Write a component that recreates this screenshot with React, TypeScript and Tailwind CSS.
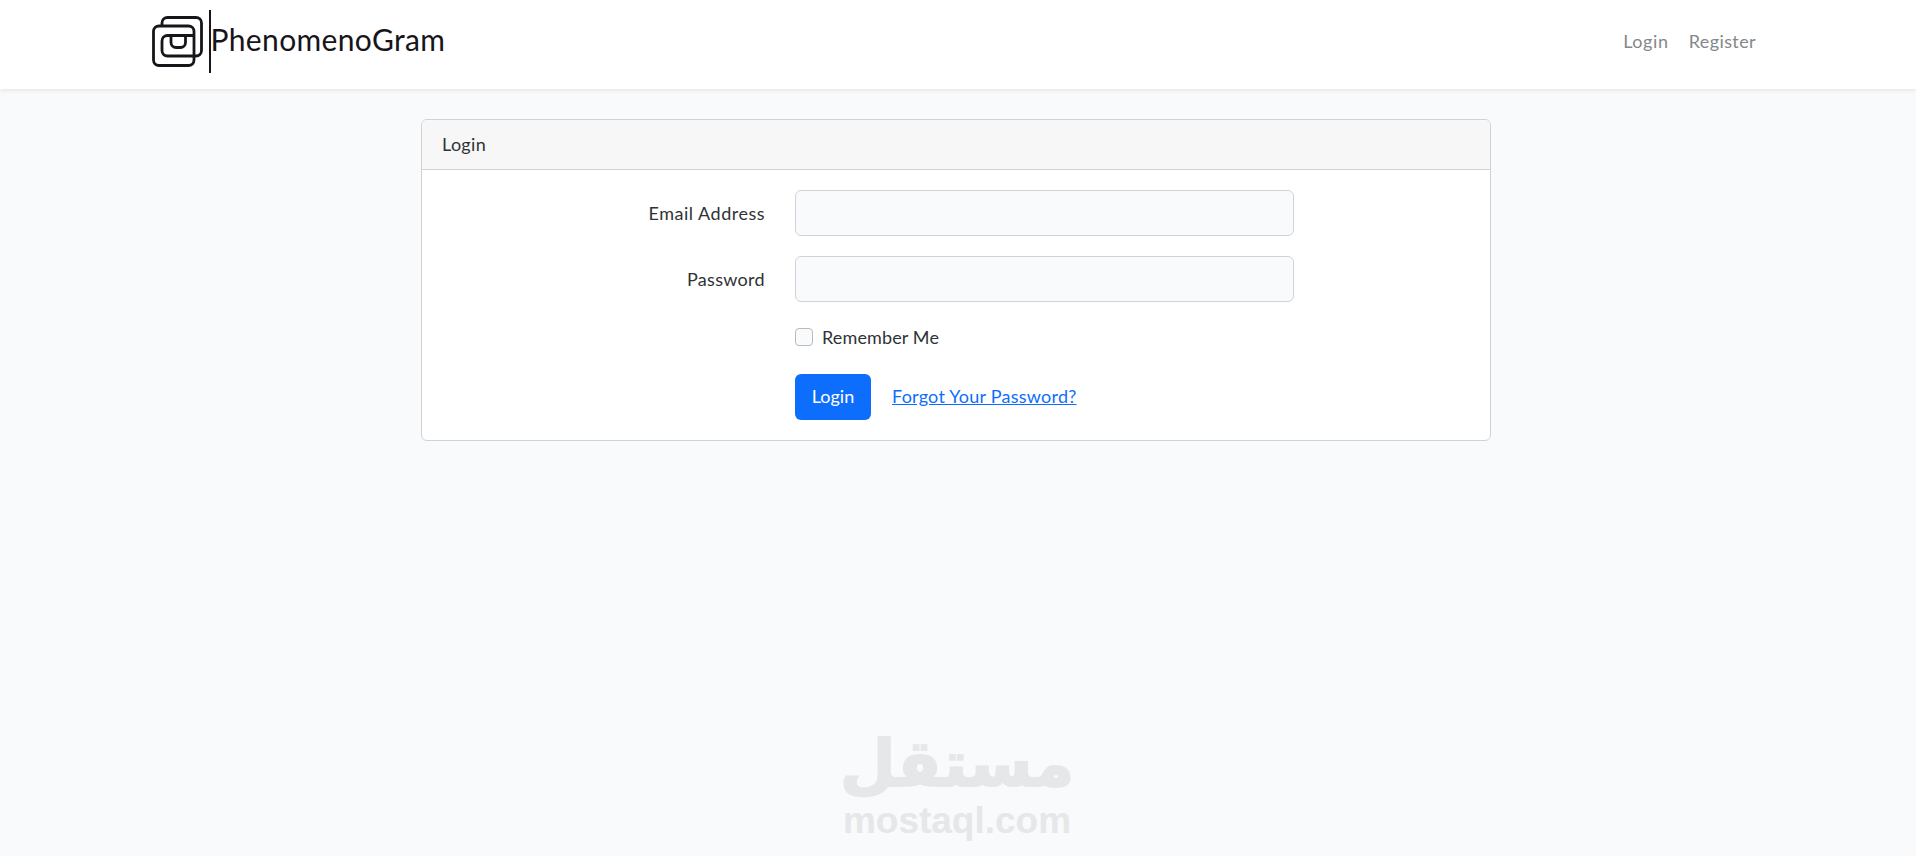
const font = { fontFamily: "Lato, 'Noto Sans', sans-serif" };

function Logo() {
  return (
    <svg width="52" height="52" viewBox="0 0 52 52" fill="none" stroke="#17151a" strokeWidth="2.8" className="shrink-0">
      <path d="M10 10V7a5.500 5.500 0 0 1 5.500-5.500h28.500a5.500 5.500 0 0 1 5.500 5.500v27.500a5.500 5.500 0 0 1-5.500 5.500h-2" />
      <rect x="1.500" y="10" width="40.500" height="39.500" rx="5.500" />
      <path d="M42 40H15.500a5.500 5.500 0 0 1-5.500-5.500V25a5.500 5.500 0 0 1 5.500-5.500H42" />
      <path d="M19 19.500v7a5 5 0 0 0 5 5h4.500a5 5 0 0 0 5-5v-7" />
    </svg>
  );
}

function Row({ label, tracking }: { label: string; tracking: string }) {
  return (
    <div className="flex items-center mb-5">
      <label className={`w-[343px] text-right text-[18px] text-[#2f3336] ${tracking}`}>{label}</label>
      <div className="ml-[30px] w-[499px] h-[46px] rounded-[6px] border border-[#ced4da] bg-[#f8fafc]" />
    </div>
  );
}

export default function App() {
  return (
    <div style={font} className="relative min-h-[856px] bg-[#f8fafc] text-[#2f3336] overflow-hidden">
      <nav className="h-[89px] bg-white shadow-[0_2px_4px_rgba(0,0,0,0.075)] flex items-start justify-between pl-[152px] pr-[160px]">
        <a className="flex items-start pt-[10px] text-[30px] leading-[58px] tracking-[0.35px] text-[#17151a]">
          <div className="mt-[6px]"><Logo /></div>
          <div className="ml-[5px] w-[1.5px] h-[63px] bg-[#17151a]" />
          <span>PhenomenoGram</span>
        </a>
        <div className="flex gap-5 pt-[29px] text-[18px] leading-[24px] text-[#84888a]">
          <a className="tracking-[0.6px]">Login</a>
          <a className="tracking-[0.4px]">Register</a>
        </div>
      </nav>
      <main className="flex justify-center pt-[30px]">
        <div className="w-[1070px] h-[322px] mr-[4px] rounded-[6px] border border-[#d0d2d4] bg-white overflow-hidden">
          <div className="h-[50px] px-5 flex items-center bg-[#f7f7f7] border-b border-[#d0d2d4] text-[18px] tracking-[0.3px]">Login</div>
          <div className="pt-5">
            <Row label="Email Address" tracking="tracking-[0.5px]" />
            <Row label="Password" tracking="tracking-[0.3px]" />
            <div className="flex items-center ml-[373px] h-[30px] mb-[22px]">
              <span className="w-[18px] h-[18px] rounded-[4px] border border-[#b9bcbf] bg-[#f8fafc]" />
              <span className="ml-[9px] text-[18px] tracking-[0.13px]">Remember Me</span>
            </div>
            <div className="flex items-center ml-[373px]">
              <button className="h-[46px] w-[76px] pb-px rounded-[6px] bg-[#0d6efd] text-white text-[18px]">Login</button>
              <a className="ml-[21px] mb-[2px] text-[18px] tracking-[0.24px] underline text-[#0d6efd]">Forgot Your Password?</a>
            </div>
          </div>
        </div>
      </main>
      <div className="absolute left-[844px] top-[726px] w-[226px] flex flex-col items-center text-[#e5e7e8]">
        <span dir="rtl" className="font-bold text-[64px] leading-[76px] [-webkit-text-stroke:2px_#e5e7e8]" style={{ fontFamily: "'DejaVu Sans', sans-serif" }}>مستقل</span>
        <span className="font-bold text-[37px] leading-[38px]" style={{ fontFamily: "'Liberation Sans', sans-serif" }}>mostaql.com</span>
      </div>
    </div>
  );
}
